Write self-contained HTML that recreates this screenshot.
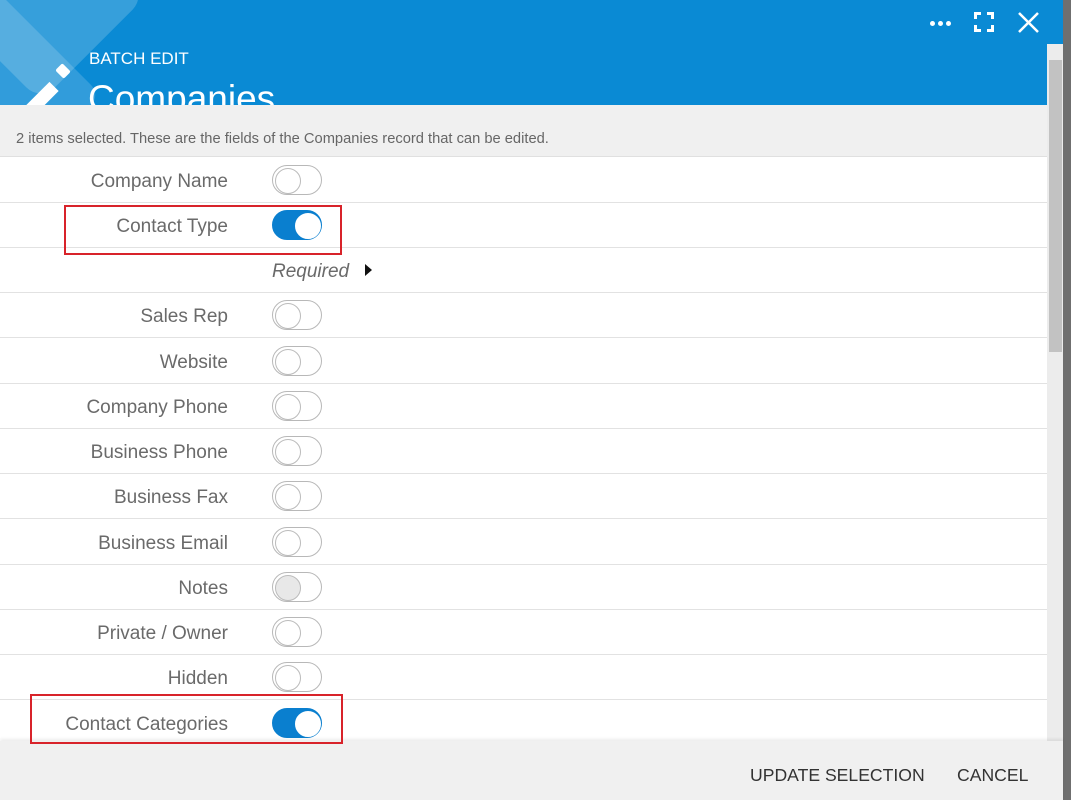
<!DOCTYPE html>
<html><head><style>
*{margin:0;padding:0;box-sizing:border-box}
body{width:1071px;height:800px;overflow:hidden;background:#fff;font-family:"Liberation Sans",sans-serif;position:relative}
.hdr{position:absolute;left:0;top:0;width:1063px;height:105px;background:#0a8ad4;overflow:hidden}
.strip{position:absolute;left:1063px;top:0;width:8px;height:800px;background:#6f6f6f}
.sub{position:absolute;left:0;top:105px;width:1047px;height:52px;background:#f0f0f0;border-bottom:1px solid #e0e0e0;font-size:14.7px;color:#666;padding:26px 0 0 16px}
.row{position:absolute;left:0;width:1047px;height:45px;border-bottom:1px solid #e2e2e2}
.lbl{position:absolute;right:819px;top:13px;font-size:19px;color:#6a6a6a;white-space:nowrap}
.tg{position:absolute;left:272px;top:7px;width:50px;height:30px;border-radius:15px;border:1px solid #b8b8b8;background:#fff}
.tg::after{content:"";position:absolute;left:2px;top:2px;width:24px;height:24px;border-radius:50%;border:1px solid #bbb;background:#fff}
.tg.on{background:#0a7fcf;border-color:#0a7fcf}
.tg.on::after{left:22px;border-color:#fff}
.tg.gr::after{background:#e8e8e8}
.sb{position:absolute;left:1047px;top:44px;width:16px;height:697px;background:#ececec}
.th{position:absolute;left:1049px;top:60px;width:13px;height:292px;background:#c2c2c2}
.foot{position:absolute;left:0;top:741px;width:1063px;height:59px;background:#f0f0f0;box-shadow:0 -2px 3px rgba(0,0,0,.08)}
.btn{position:absolute;top:765px;font-size:17.6px;color:#333}
.red{position:absolute;border:2px solid #d8232a}
</style></head><body>
<div class="hdr">
<div style="position:absolute;left:-60px;top:-90px;width:180px;height:150px;border-radius:20px;background:rgba(255,255,255,.18);transform:rotate(45deg)"></div>
<div style="position:absolute;left:-80px;top:20px;width:150px;height:150px;border-radius:14px;background:rgba(255,255,255,.16);transform:rotate(45deg)"></div>
<div style="position:absolute;left:32px;top:80px;width:13px;height:44px;background:#fff;transform:rotate(45deg)"></div>
<div style="position:absolute;left:57px;top:66px;width:12px;height:10px;background:#fff;transform:rotate(45deg);border-radius:2px"></div>
<div style="position:absolute;left:89px;top:49px;font-size:17px;color:#fff">BATCH EDIT</div>
<div style="position:absolute;left:88px;top:78px;font-size:37px;color:#fff">Companies</div>
<div style="position:absolute;left:930px;top:21px;width:22px;height:6px">
<span style="position:absolute;left:0;width:5px;height:5px;border-radius:50%;background:#fff"></span>
<span style="position:absolute;left:8px;width:5px;height:5px;border-radius:50%;background:#fff"></span>
<span style="position:absolute;left:16px;width:5px;height:5px;border-radius:50%;background:#fff"></span></div>
<svg style="position:absolute;left:974px;top:12px" width="20" height="20" viewBox="0 0 20 20" fill="none" stroke="#fff" stroke-width="3"><path d="M1.5 7V1.5H7M13 1.5h5.5V7M18.5 13v5.5H13M7 18.5H1.5V13"/></svg>
<svg style="position:absolute;left:1018px;top:12px" width="21" height="21" viewBox="0 0 21 21" stroke="#fff" stroke-width="2.5"><path d="M1 1l19 19M20 1L1 20"/></svg>
</div>
<div class="strip"></div>
<div class="sub">2 items selected. These are the fields of the Companies record that can be edited.</div>
<div class="row" style="top:158px"><span class="lbl">Company Name</span><span class="tg"></span></div>
<div class="row" style="top:203px"><span class="lbl">Contact Type</span><span class="tg on"></span></div>
<div class="row" style="top:248px"><span class="lbl" style="right:auto;font-style:italic;left:272px">Required</span><span style="position:absolute;left:365px;top:16px;width:0;height:0;border-left:7px solid #111;border-top:6px solid transparent;border-bottom:6px solid transparent"></span></div>
<div class="row" style="top:293px"><span class="lbl">Sales Rep</span><span class="tg"></span></div>
<div class="row" style="top:339px"><span class="lbl">Website</span><span class="tg"></span></div>
<div class="row" style="top:384px"><span class="lbl">Company Phone</span><span class="tg"></span></div>
<div class="row" style="top:429px"><span class="lbl">Business Phone</span><span class="tg"></span></div>
<div class="row" style="top:474px"><span class="lbl">Business Fax</span><span class="tg"></span></div>
<div class="row" style="top:520px"><span class="lbl">Business Email</span><span class="tg"></span></div>
<div class="row" style="top:565px"><span class="lbl">Notes</span><span class="tg gr"></span></div>
<div class="row" style="top:610px"><span class="lbl">Private / Owner</span><span class="tg"></span></div>
<div class="row" style="top:655px"><span class="lbl">Hidden</span><span class="tg"></span></div>
<div class="row" style="top:701px;border:0"><span class="lbl">Contact Categories</span><span class="tg on"></span></div>
<div class="sb"></div><div class="th"></div>
<div class="foot"></div>
<div class="btn" style="left:750px">UPDATE SELECTION</div>
<div class="btn" style="left:957px">CANCEL</div>
<div class="red" style="left:64px;top:205px;width:278px;height:50px"></div>
<div class="red" style="left:30px;top:694px;width:313px;height:50px"></div>
</body></html>
